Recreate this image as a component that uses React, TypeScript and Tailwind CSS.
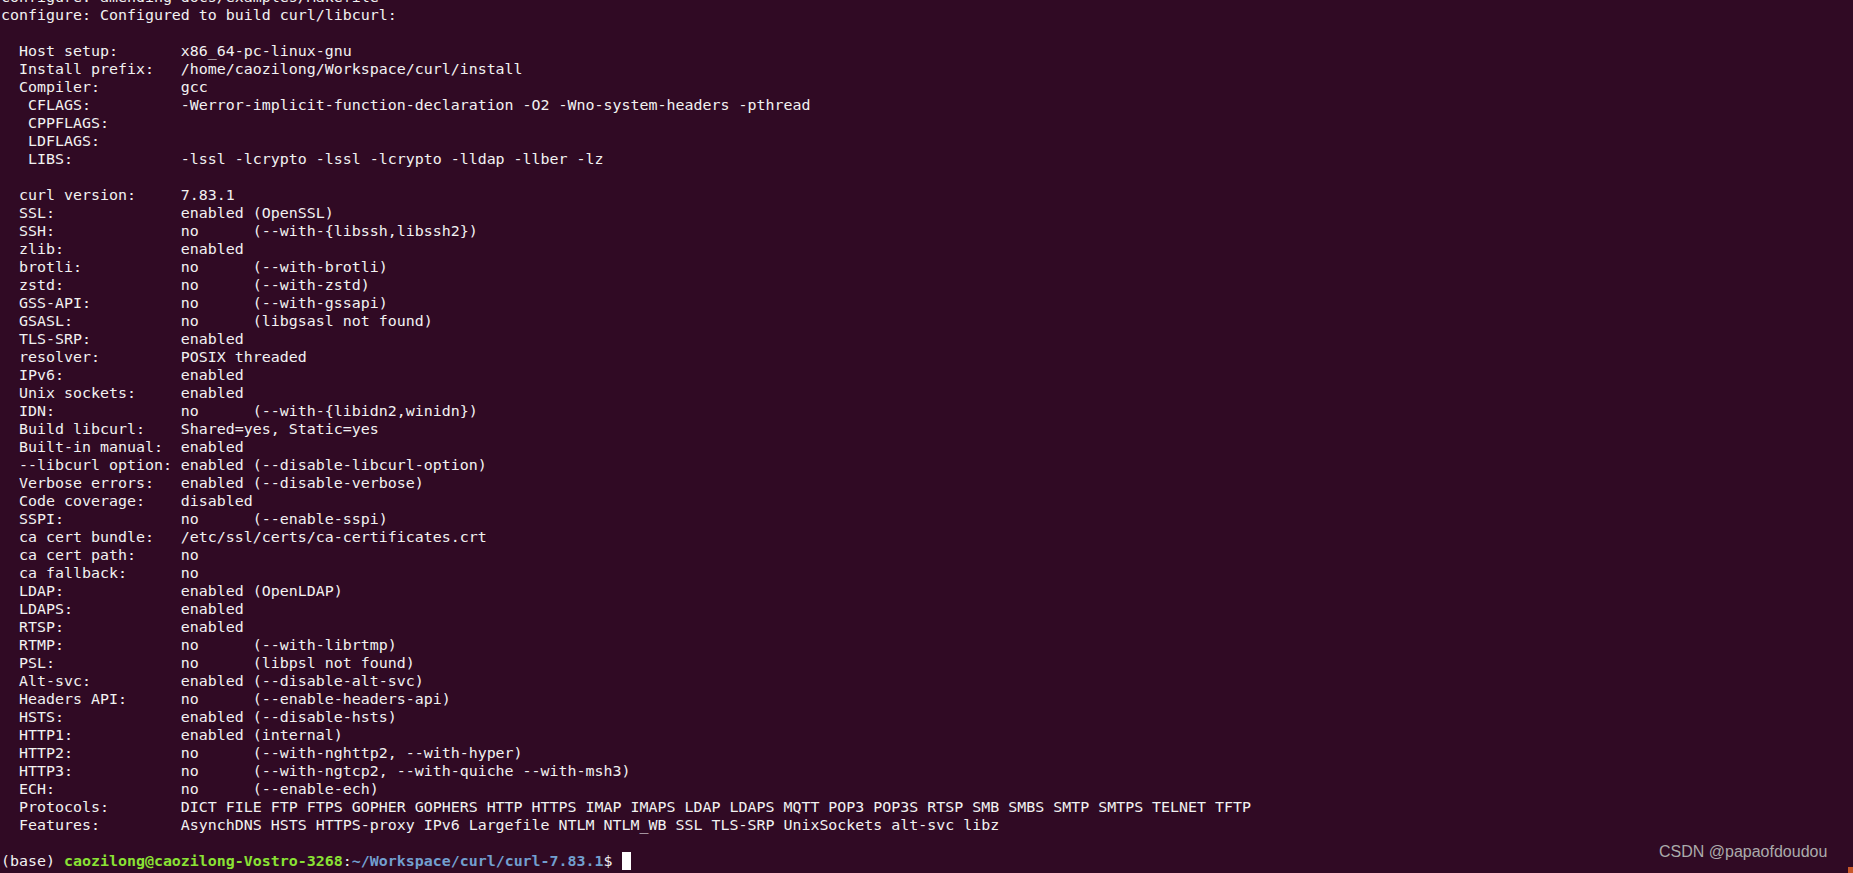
import React from "react";

const pad = (s: string, n: number) => s + " ".repeat(Math.max(0, n - s.length));

type Row = [string, string] | string;

const rows: Row[] = [
  "configure: amending docs/examples/Makefile",
  "configure: Configured to build curl/libcurl:",
  "",
  ["  Host setup:", "x86_64-pc-linux-gnu"],
  ["  Install prefix:", "/home/caozilong/Workspace/curl/install"],
  ["  Compiler:", "gcc"],
  ["   CFLAGS:", "-Werror-implicit-function-declaration -O2 -Wno-system-headers -pthread"],
  ["   CPPFLAGS:", ""],
  ["   LDFLAGS:", ""],
  ["   LIBS:", "-lssl -lcrypto -lssl -lcrypto -lldap -llber -lz"],
  "",
  ["  curl version:", "7.83.1"],
  ["  SSL:", "enabled (OpenSSL)"],
  ["  SSH:", "no      (--with-{libssh,libssh2})"],
  ["  zlib:", "enabled"],
  ["  brotli:", "no      (--with-brotli)"],
  ["  zstd:", "no      (--with-zstd)"],
  ["  GSS-API:", "no      (--with-gssapi)"],
  ["  GSASL:", "no      (libgsasl not found)"],
  ["  TLS-SRP:", "enabled"],
  ["  resolver:", "POSIX threaded"],
  ["  IPv6:", "enabled"],
  ["  Unix sockets:", "enabled"],
  ["  IDN:", "no      (--with-{libidn2,winidn})"],
  ["  Build libcurl:", "Shared=yes, Static=yes"],
  ["  Built-in manual:", "enabled"],
  ["  --libcurl option:", "enabled (--disable-libcurl-option)"],
  ["  Verbose errors:", "enabled (--disable-verbose)"],
  ["  Code coverage:", "disabled"],
  ["  SSPI:", "no      (--enable-sspi)"],
  ["  ca cert bundle:", "/etc/ssl/certs/ca-certificates.crt"],
  ["  ca cert path:", "no"],
  ["  ca fallback:", "no"],
  ["  LDAP:", "enabled (OpenLDAP)"],
  ["  LDAPS:", "enabled"],
  ["  RTSP:", "enabled"],
  ["  RTMP:", "no      (--with-librtmp)"],
  ["  PSL:", "no      (libpsl not found)"],
  ["  Alt-svc:", "enabled (--disable-alt-svc)"],
  ["  Headers API:", "no      (--enable-headers-api)"],
  ["  HSTS:", "enabled (--disable-hsts)"],
  ["  HTTP1:", "enabled (internal)"],
  ["  HTTP2:", "no      (--with-nghttp2, --with-hyper)"],
  ["  HTTP3:", "no      (--with-ngtcp2, --with-quiche --with-msh3)"],
  ["  ECH:", "no      (--enable-ech)"],
  [
    "  Protocols:",
    "DICT FILE FTP FTPS GOPHER GOPHERS HTTP HTTPS IMAP IMAPS LDAP LDAPS MQTT POP3 POP3S RTSP SMB SMBS SMTP SMTPS TELNET TFTP",
  ],
  [
    "  Features:",
    "AsynchDNS HSTS HTTPS-proxy IPv6 Largefile NTLM NTLM_WB SSL TLS-SRP UnixSockets alt-svc libz",
  ],
  "",
];

export default function App() {
  return (
    <div className="relative w-[1853px] h-[873px] overflow-hidden bg-[#300a24]">
      <div className="mt-[-12px] pl-[1px] font-['DejaVu_Sans_Mono',monospace] text-[14.95px] leading-[18px] text-[#f2f2f2]">
        {rows.map((r, i) => (
          <div key={i} className="h-[18px] whitespace-pre">
            {typeof r === "string" ? r : pad(r[0], 20) + r[1]}
          </div>
        ))}
        <div className="h-[18px] whitespace-pre flex items-start">
          <span>(base) </span>
          <span className="font-bold text-[#8ae234]">caozilong@caozilong-Vostro-3268</span>
          <span>:</span>
          <span className="font-bold text-[#729fcf]">~/Workspace/curl/curl-7.83.1</span>
          <span>$ </span>
          <span className="inline-block w-[9px] h-[18px] bg-[#ffffff]"></span>
        </div>
      </div>
      <div className="absolute left-[1659px] top-[842px] font-['Liberation_Sans',Arial,sans-serif] text-[16px] leading-[20px] text-[#ababab]">
        CSDN @papaofdoudou
      </div>
      <div className="absolute left-[1848px] top-[867px] w-[5px] h-[6px] bg-[#c8582a]"></div>
    </div>
  );
}
